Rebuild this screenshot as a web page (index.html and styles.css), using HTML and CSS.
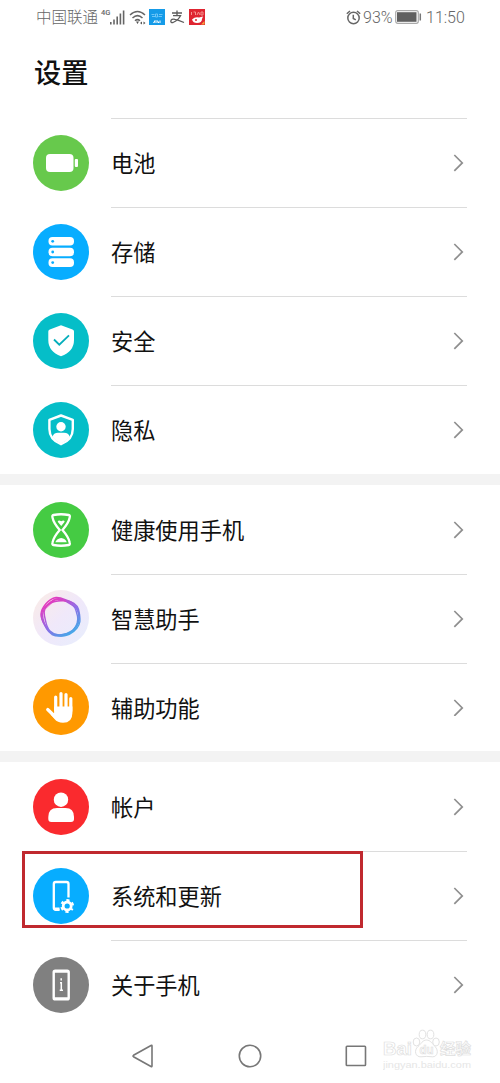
FILE: index.html
```html
<!DOCTYPE html>
<html lang="zh-CN">
<head>
    <meta charset="UTF-8">
    <meta name="viewport" content="width=device-width, initial-scale=1.0">
    <title>设置</title>
    <link rel="stylesheet" href="styles.css">
</head>
<body>
    <header class="status-bar">
        <span class="carrier">中国联通</span>
        <span class="network">4G</span>
        <svg class="signal" width="15" height="15" viewBox="0 0 15 15">
            <path d="M.8 12v2.5M4 9.5v5M7.2 6.5v8M10.4 3.5v11M13.6 .5v14" stroke="#666" stroke-width="1.600" fill="none"/>
        </svg>
        <svg class="wifi" width="17" height="15" viewBox="0 0 17 15">
            <path d="M1 5Q8.500-2 16 5M3.500 8Q8.500 3.300 13.500 8M6 10.800Q8.500 8.500 11 10.800" stroke="#666" stroke-width="1.500" fill="none"/>
            <path d="M7 11.500h3l-1.500 2.500zM11 13l2-1.500v3zM16.500 13l-2-1.500v3z" fill="#555"/>
        </svg>
        <svg class="app" width="16" height="16" viewBox="0 0 16 16">
            <rect width="16" height="16" fill="#159be8"/>
            <path d="M2.500 5.500h3M3 7.500h3M6.500 5h2v3h-2zM10 5.500h3.500M9.500 7.500h3.500" stroke="#6cc6f8" fill="none"/>
            <path d="M4.500 14l1.500-2.500V14M8 14v-2.500l1.500 1.500V14M11 11.500V14" stroke="#fff" fill="none"/>
        </svg>
        <svg class="pay" width="15" height="14" viewBox="0 0 15 14">
            <path d="M2 3h10M7 .500v5M3 5.700h7.500Q8 10.500 3 12.500Q.8 13 .8 11.200Q1 8.500 5 9.300Q9 10 14 12.500" stroke="#5c5c5c" stroke-width="1.300" fill="none"/>
        </svg>
        <svg class="app" width="16" height="16" viewBox="0 0 16 16">
            <rect width="16" height="16" fill="#df2531"/>
            <path d="M2.500 3v3M4.500 3h2v3M8 6l1.500-3L11 6M12 3h2v3h-2z" stroke="#f5928e" fill="none"/>
            <path d="M3 10.500q3-3 7-2l4-1-1 2.500q0 4-5 4-4 0-5-3.500z" fill="#fff"/>
            <circle cx="7" cy="11" r="1" fill="#df2531"/>
            <path d="M12 15.500l3.500-3.500v3.500z" fill="#f5a43c"/>
        </svg>
        <div class="status-right">
            <svg width="15" height="15" viewBox="0 0 15 15" fill="none" stroke="#666" stroke-width="1.500">
                <circle cx="7.500" cy="8" r="5.700"/>
                <path d="M7.300 4.800v3.700l2.500 1.300M.8 3.800L4 1M14.200 3.800L11 1"/>
            </svg>
            <span class="percent">93%</span>
            <svg class="battery" width="27" height="14" viewBox="0 0 27 14">
                <rect x=".7" y=".7" width="22.600" height="12.600" rx="2" fill="#fff" stroke="#aaa" stroke-width="1.200"/>
                <rect x="2" y="2.200" width="19.500" height="9.600" fill="#606060"/>
                <path d="M25.300 3.500v7" stroke="#777" stroke-width="1.500"/>
            </svg>
            <span class="time">11:50</span>
        </div>
    </header>

    <h1 class="title">设置</h1>

    <main>
        <section class="group">
            <a class="row">
                <svg class="icon" viewBox="0 0 56 56">
                    <circle cx="28" cy="28" r="28" fill="#67c94c"/>
                    <rect x="13" y="19" width="27.500" height="18" rx="4" fill="#fff"/>
                    <rect x="41.800" y="24" width="3.200" height="8" rx="1" fill="#fff"/>
                </svg>
                <div class="label">电池</div>
                <svg class="arrow" viewBox="0 0 11 18"><path d="M1.300 1L9.300 9l-8 8"/></svg>
            </a>
            <a class="row">
                <svg class="icon" viewBox="0 0 56 56">
                    <circle cx="28" cy="28" r="28" fill="#07adff"/>
                    <g fill="#fff">
                        <rect x="15.500" y="13" width="25.500" height="8.600" rx="4"/>
                        <rect x="15.500" y="23.700" width="25.500" height="8.600" rx="4"/>
                        <rect x="15.500" y="34.300" width="25.500" height="8.600" rx="4"/>
                    </g>
                    <g fill="#07adff">
                        <circle cx="19.700" cy="17.300" r="1.400"/>
                        <circle cx="19.700" cy="28" r="1.400"/>
                        <circle cx="19.700" cy="38.600" r="1.400"/>
                    </g>
                </svg>
                <div class="label">存储</div>
                <svg class="arrow" viewBox="0 0 11 18"><path d="M1.300 1L9.300 9l-8 8"/></svg>
            </a>
            <a class="row">
                <svg class="icon" viewBox="0 0 56 56">
                    <circle cx="28" cy="28" r="28" fill="#05bec8"/>
                    <path d="M28 12.300L39.500 16.500Q41 17 41 18.500V27Q41 38.500 28 43.300Q15.300 38.500 15.300 27V18.500Q15.300 17 16.800 16.500Z" fill="#fff"/>
                    <path d="M21 26.500l5.300 5.200L36 22.300" stroke="#05aebb" stroke-width="1.800" fill="none"/>
                </svg>
                <div class="label">安全</div>
                <svg class="arrow" viewBox="0 0 11 18"><path d="M1.300 1L9.300 9l-8 8"/></svg>
            </a>
            <a class="row">
                <svg class="icon" viewBox="0 0 56 56">
                    <circle cx="28" cy="28" r="28" fill="#05bec8"/>
                    <path d="M28 13.500L39.800 17.800V27Q39.800 37.500 28 42.200Q16.400 37.500 16.400 27V17.800Z" fill="none" stroke="#fff" stroke-width="2.400" stroke-linejoin="round"/>
                    <circle cx="28" cy="24.700" r="4.700" fill="#fff"/>
                    <path d="M19.500 35Q20.500 30.800 25 30.800H31Q35.700 30.800 36.700 35Q33.500 39 28 41.500Q22.500 39 19.500 35Z" fill="#fff"/>
                </svg>
                <div class="label">隐私</div>
                <svg class="arrow" viewBox="0 0 11 18"><path d="M1.300 1L9.300 9l-8 8"/></svg>
            </a>
        </section>

        <section class="group">
            <a class="row">
                <svg class="icon" viewBox="0 0 56 56">
                    <circle cx="28" cy="28" r="28" fill="#45cb43"/>
                    <path d="M20.500 13Q28 11.500 35.700 13Q37.300 13.300 36.700 15.500C35.800 20.500 32.500 24.500 29.500 28C32.500 31.500 35.800 35.500 36.700 40.500Q37.300 42.700 35.700 43Q28 44.500 20.500 43Q18.900 42.700 19.500 40.500C20.400 35.500 23.700 31.500 26.700 28C23.700 24.500 20.400 20.500 19.500 15.500Q18.900 13.300 20.500 13Z" fill="none" stroke="#fff" stroke-width="2.300"/>
                    <path d="M28.200 24L24.700 19.800Q25.500 17.500 28.200 19.300Q31 17.500 31.700 19.800ZM22.300 40.300Q24 36.500 28.200 36Q32.300 36.500 33.800 40.300Z" fill="#fff"/>
                </svg>
                <div class="label">健康使用手机</div>
                <svg class="arrow" viewBox="0 0 11 18"><path d="M1.300 1L9.300 9l-8 8"/></svg>
            </a>
            <a class="row">
                <svg class="icon" viewBox="0 0 56 56">
                    <defs>
                        <linearGradient id="pale" x1="0" y1="0" x2="1" y2="1">
                            <stop offset="0" stop-color="#fbece5"/>
                            <stop offset=".5" stop-color="#f0e8fa"/>
                            <stop offset="1" stop-color="#e7eefd"/>
                        </linearGradient>
                        <linearGradient id="ring" gradientUnits="userSpaceOnUse" x1="16" y1="12" x2="40" y2="44">
                            <stop offset="0" stop-color="#e23cc0"/>
                            <stop offset=".5" stop-color="#8f6be6"/>
                            <stop offset="1" stop-color="#3fabe8"/>
                        </linearGradient>
                    </defs>
                    <circle cx="28" cy="28" r="28" fill="url(#pale)"/>
                    <!-- four loops twisted around each other -->
                    <g fill="none" stroke="url(#ring)" stroke-width="1.400">
                        <path d="M23 7.500C28 7 32 10 37 11.500C43 13.500 46 18 46.500 24C47 29 48 33 44 38C40 43 34 46 28 46C22 46 17 43 14 38C11 33 7.500 29 8 24C8.500 18 15 9 23 7.500Z"/>
                        <path d="M25 11C31 10 37 10.500 41 14.500C45 18 46.500 22 46 28C45.500 34 42 39 37 43C32 46.500 24 47 19 44.500C14 41 11.500 36 10 29C8.500 23 11 18 15.500 14.500C18 12 21 11.500 25 11Z"/>
                        <path d="M20 10.500C25 6.500 31 9.500 37 13C42 15.500 43 20 44.500 26C46 32 43.500 36 40 40.500C36 44.500 30 44.500 25 45C19 45.500 15 41 12 36C9 31 7 26 9.500 20.500C11.500 16 15 14 20 10.500Z"/>
                        <path d="M26 9C32 9.500 36 13.500 40 15.500C45 18 46 23 46 29C46 36 40 41 34 43.500C28 46 21 45 17 41C13 37 13 32 11.500 26C10 20 14 15 18 12.500C20 10.500 23 9 26 9Z"/>
                    </g>
                    <path d="M12.500 18L22 9.500L33 11" fill="none" stroke="#e23cc0" stroke-width="2" stroke-linejoin="round" opacity=".5"/>
                </svg>
                <div class="label">智慧助手</div>
                <svg class="arrow" viewBox="0 0 11 18"><path d="M1.300 1L9.300 9l-8 8"/></svg>
            </a>
            <a class="row">
                <svg class="icon" viewBox="0 0 56 56">
                    <circle cx="28" cy="28" r="28" fill="#ff9900"/>
                    <path d="M22.700 18V31M28 14.500V29M33 15.500V29M37.800 19.500V32M14.700 30.500L22 37.500" stroke="#fff" stroke-width="3.200" stroke-linecap="round"/>
                    <path d="M21.100 27.500H39.400V34Q39.400 43.800 30 43.800Q24.500 43.800 21.500 40L17.500 35.500L21.100 34Z" fill="#fff"/>
                </svg>
                <div class="label">辅助功能</div>
                <svg class="arrow" viewBox="0 0 11 18"><path d="M1.300 1L9.300 9l-8 8"/></svg>
            </a>
        </section>

        <section class="group">
            <a class="row">
                <svg class="icon" viewBox="0 0 56 56">
                    <circle cx="28" cy="28" r="28" fill="#fa2a2e"/>
                    <circle cx="28" cy="20.700" r="7.200" fill="#fff"/>
                    <path d="M15.300 40V38Q15.300 29 24 29H32.500Q41 29 41 38V40Q41 43 38 43H18.300Q15.300 43 15.300 40Z" fill="#fff"/>
                </svg>
                <div class="label">帐户</div>
                <svg class="arrow" viewBox="0 0 11 18"><path d="M1.300 1L9.300 9l-8 8"/></svg>
            </a>
            <a class="row marked">
                <svg class="icon" viewBox="0 0 56 56">
                    <circle cx="28" cy="28" r="28" fill="#07adff"/>
                    <path d="M26.500 41.800H22.800Q20.800 41.800 20.800 39.800V16Q20.800 14 22.800 14H33.500Q35.500 14 35.500 16V29.500" fill="none" stroke="#fff" stroke-width="2.300"/>
                    <path d="M21 39.500h5.500v3H22z" fill="#fff"/>
                    <circle cx="34.200" cy="38" r="4" fill="none" stroke="#fff" stroke-width="2.800"/>
                    <circle cx="34.200" cy="38" r="5.800" fill="none" stroke="#fff" stroke-width="2.200" stroke-dasharray="3.040 3.040" stroke-dashoffset="1.500" transform="rotate(30 34.200 38)"/>
                </svg>
                <div class="label">系统和更新</div>
                <svg class="arrow" viewBox="0 0 11 18"><path d="M1.300 1L9.300 9l-8 8"/></svg>
            </a>
            <a class="row">
                <svg class="icon" viewBox="0 0 56 56">
                    <circle cx="28" cy="28" r="28" fill="#808080"/>
                    <rect x="20.700" y="13.700" width="15" height="28.700" rx="1.500" fill="none" stroke="#fff" stroke-width="2.400"/>
                    <path d="M21 14.500h14.500M21 41.500h14.500" stroke="#fff" stroke-width="2.500"/>
                    <path d="M28.200 21.300v2.200M27 25.700h1.300v7.500M26.700 33.200h3.300" stroke="#fff" stroke-width="1.500" fill="none"/>
                </svg>
                <div class="label">关于手机</div>
                <svg class="arrow" viewBox="0 0 11 18"><path d="M1.300 1L9.300 9l-8 8"/></svg>
            </a>
        </section>
    </main>

    <nav class="nav-bar">
        <svg width="24" height="24" viewBox="0 0 24 24"><path d="M21 1.900V22.100Q21 23 20 22.500L2.500 12.700Q1.500 12 2.500 11.300L20 1.500Q21 1 21 1.900Z"/></svg>
        <svg width="24" height="24" viewBox="0 0 24 24"><circle cx="12" cy="12" r="10.700"/></svg>
        <svg width="24" height="24" viewBox="0 0 24 24"><rect x="2.300" y="2.300" width="19.200" height="19.200" rx=".7"/></svg>
    </nav>

    <div class="watermark">
        <svg width="92" height="46" viewBox="0 0 92 46">
            <g fill="#fff" stroke="#e2e2e2">
                <ellipse cx="33.500" cy="16" rx="3.300" ry="4"/>
                <ellipse cx="39.500" cy="8.500" rx="3.300" ry="4.300"/>
                <ellipse cx="47.500" cy="8.500" rx="3.300" ry="4.300"/>
                <ellipse cx="53" cy="16" rx="3.300" ry="4"/>
                <path d="M43.500 14C47.500 14 49.500 18 52 20.500C56 24.500 54.500 31 49.500 30.800Q43.500 30 38 30.800C32.500 31.300 30.500 24.500 35 20.500C38 18 39.500 14 43.500 14Z"/>
            </g>
            <g class="wm-text">
                <text x="0" y="29" font-size="18.500" textLength="29" lengthAdjust="spacingAndGlyphs">Bai</text>
                <text x="36.500" y="28" font-size="12.500" textLength="14" lengthAdjust="spacingAndGlyphs">du</text>
                <text x="57" y="28" font-size="15" textLength="31" lengthAdjust="spacingAndGlyphs">经验</text>
            </g>
            <text class="wm-url" x="0" y="42" font-size="9.500" textLength="88" lengthAdjust="spacingAndGlyphs">jingyan.baidu.com</text>
        </svg>
    </div>
</body>
</html>
```
FILE: styles.css
```css
* {
    box-sizing: border-box;
}

body {
    margin: 0;
    width: 500px;
    height: 1083px;
    position: relative;
    overflow: hidden;
    background: #fff;
    color: #111;
    font-family: Roboto, "Noto Sans CJK SC", sans-serif;
}

/* status bar */
.status-bar {
    display: flex;
    align-items: center;
    height: 34px;
    padding: 0 36px 0 36px;
    color: #666;
    line-height: 34px;
}

.carrier {
    font-size: 15.500px;
    width: 65px;
    padding-top: 2px;
    font-weight: 300;
    white-space: nowrap;
}

.network {
    width: 9px;
    font-size: 7.500px;
    font-weight: 500;
    line-height: 10px;
    margin-bottom: 8px;
}

.wifi {
    margin-left: 4px;
}

.app {
    margin-left: 3px;
}

.pay {
    margin: 0 1px 0 5px;
}

.status-right {
    display: flex;
    align-items: center;
    margin-left: auto;
}

.percent {
    font-size: 16px;
    font-weight: 300;
    width: 30px;
    margin-left: 2px;
    padding-top: 1px;
}

.battery {
    margin: 0 4px 0 2px;
}

.time {
    font-size: 16px;
    font-weight: 300;
    width: 38px;
    padding-top: 1px;
}

.title {
    margin: 0;
    height: 84.250px;
    padding: 20px 0 0 34px;
    font-size: 27.200px;
    font-weight: 500;
    line-height: 40px;
}

/* settings list */
.group + .group {
    border-top: 11.200px solid #f3f3f3;
}

.row {
    display: flex;
    align-items: center;
    height: 88.900px;
    padding: 0 33px 0 33px;
    position: relative;
}

.icon {
    width: 56px;
    height: 56px;
    margin-top: .6px;
    margin-right: 22px;
}

.label {
    flex: 1;
    height: 100%;
    border-top: 1px solid #dcdcdc;
    font-size: 22.200px;
    line-height: 90px;
}

.group + .group .row:first-child .label {
    border-top-color: transparent;
}

.arrow {
    width: 14px;
    height: 100%;
    padding: 35px 3px 35px 0;
    border-top: 1px solid #dcdcdc;
    fill: none;
    stroke: #8f8f8f;
    stroke-width: 1.700;
}

.group + .group .row:first-child .arrow {
    border-top-color: transparent;
}

.marked::after {
    content: "";
    box-sizing: border-box;
    position: absolute;
    left: 22px;
    top: 0;
    width: 341px;
    height: 77px;
    border: 3px solid #c0292f;
}

/* navigation keys */
.nav-bar {
    display: flex;
    justify-content: space-between;
    padding: 14.500px 132px 0 131px;
    fill: none;
    stroke: #777;
    stroke-width: 1.600;
}

.watermark {
    position: absolute;
    left: 383px;
    top: 1026px;
}

.wm-text {
    font-family: "Liberation Sans", "Noto Sans CJK SC", sans-serif;
    font-weight: bold;
    fill: #fff;
    stroke: #dedede;
    stroke-width: .7;
}

.wm-url {
    font-family: "Liberation Sans", sans-serif;
    fill: #e6e6e6;
}
```
